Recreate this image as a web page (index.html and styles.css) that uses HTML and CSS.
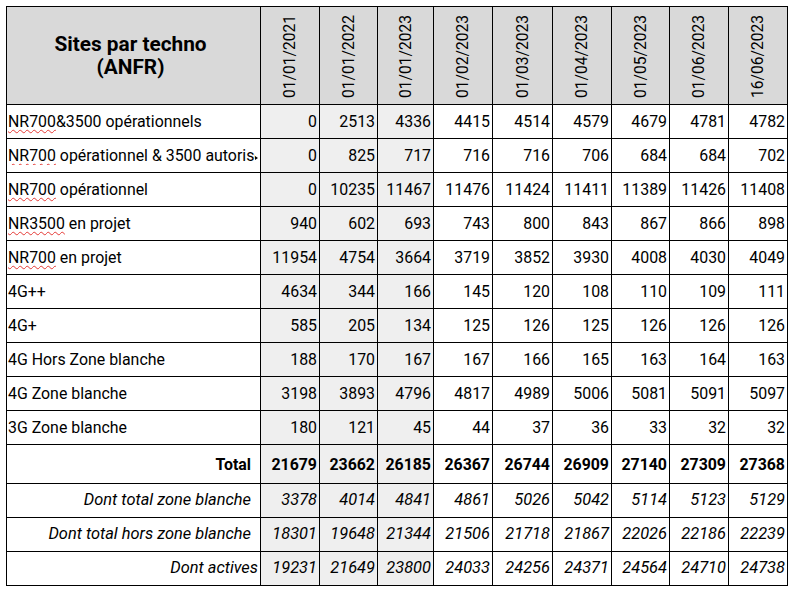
FILE: index.html
```html
<!DOCTYPE html>
<html lang="fr">
<head>
<meta charset="utf-8">
<title>Sites par techno (ANFR)</title>
<link rel="stylesheet" href="styles.css">
</head>
<body>
<div class="sheet">
  <div class="c hd title">Sites par techno<br>(ANFR)</div>
  <div class="c hd date"><span>01/01/2021</span></div>
  <div class="c hd date"><span>01/01/2022</span></div>
  <div class="c hd date"><span>01/01/2023</span></div>
  <div class="c hd date"><span>01/02/2023</span></div>
  <div class="c hd date"><span>01/03/2023</span></div>
  <div class="c hd date"><span>01/04/2023</span></div>
  <div class="c hd date"><span>01/05/2023</span></div>
  <div class="c hd date"><span>01/06/2023</span></div>
  <div class="c hd date"><span>16/06/2023</span></div>

  <div class="c lbl"><span class="t"><span class="sp">NR700</span>&amp;3500 opérationnels</span></div>
  <div class="c num g">0</div><div class="c num g">2513</div><div class="c num g">4336</div><div class="c num">4415</div><div class="c num">4514</div><div class="c num">4579</div><div class="c num">4679</div><div class="c num">4781</div><div class="c num">4782</div>

  <div class="c lbl trunc"><span class="t clip"><span class="sp">NR700</span> opérationnel &amp; 3500 autorisés</span><span class="tri"></span></div>
  <div class="c num g">0</div><div class="c num g">825</div><div class="c num g">717</div><div class="c num">716</div><div class="c num">716</div><div class="c num">706</div><div class="c num">684</div><div class="c num">684</div><div class="c num">702</div>

  <div class="c lbl"><span class="t"><span class="sp">NR700</span> opérationnel</span></div>
  <div class="c num g">0</div><div class="c num g">10235</div><div class="c num g">11467</div><div class="c num">11476</div><div class="c num">11424</div><div class="c num">11411</div><div class="c num">11389</div><div class="c num">11426</div><div class="c num">11408</div>

  <div class="c lbl"><span class="t"><span class="sp">NR3500</span> en projet</span></div>
  <div class="c num g">940</div><div class="c num g">602</div><div class="c num g">693</div><div class="c num">743</div><div class="c num">800</div><div class="c num">843</div><div class="c num">867</div><div class="c num">866</div><div class="c num">898</div>

  <div class="c lbl"><span class="t"><span class="sp">NR700</span> en projet</span></div>
  <div class="c num g">11954</div><div class="c num g">4754</div><div class="c num g">3664</div><div class="c num">3719</div><div class="c num">3852</div><div class="c num">3930</div><div class="c num">4008</div><div class="c num">4030</div><div class="c num">4049</div>

  <div class="c lbl">4G++</div>
  <div class="c num g">4634</div><div class="c num g">344</div><div class="c num g">166</div><div class="c num">145</div><div class="c num">120</div><div class="c num">108</div><div class="c num">110</div><div class="c num">109</div><div class="c num">111</div>

  <div class="c lbl">4G+</div>
  <div class="c num g">585</div><div class="c num g">205</div><div class="c num g">134</div><div class="c num">125</div><div class="c num">126</div><div class="c num">125</div><div class="c num">126</div><div class="c num">126</div><div class="c num">126</div>

  <div class="c lbl">4G Hors Zone blanche</div>
  <div class="c num g">188</div><div class="c num g">170</div><div class="c num g">167</div><div class="c num">167</div><div class="c num">166</div><div class="c num">165</div><div class="c num">163</div><div class="c num">164</div><div class="c num">163</div>

  <div class="c lbl">4G Zone blanche</div>
  <div class="c num g">3198</div><div class="c num g">3893</div><div class="c num g">4796</div><div class="c num">4817</div><div class="c num">4989</div><div class="c num">5006</div><div class="c num">5081</div><div class="c num">5091</div><div class="c num">5097</div>

  <div class="c lbl">3G Zone blanche</div>
  <div class="c num g">180</div><div class="c num g">121</div><div class="c num g">45</div><div class="c num">44</div><div class="c num">37</div><div class="c num">36</div><div class="c num">33</div><div class="c num">32</div><div class="c num">32</div>

  <div class="c lbl right pad tot">Total</div>
  <div class="c num g tot">21679</div><div class="c num g tot">23662</div><div class="c num g tot">26185</div><div class="c num tot">26367</div><div class="c num tot">26744</div><div class="c num tot">26909</div><div class="c num tot">27140</div><div class="c num tot">27309</div><div class="c num tot">27368</div>

  <div class="c lbl right pad it">Dont total zone blanche</div>
  <div class="c num g it">3378</div><div class="c num g it">4014</div><div class="c num g it">4841</div><div class="c num it">4861</div><div class="c num it">5026</div><div class="c num it">5042</div><div class="c num it">5114</div><div class="c num it">5123</div><div class="c num it">5129</div>

  <div class="c lbl right pad it">Dont total hors zone blanche</div>
  <div class="c num g it">18301</div><div class="c num g it">19648</div><div class="c num g it">21344</div><div class="c num it">21506</div><div class="c num it">21718</div><div class="c num it">21867</div><div class="c num it">22026</div><div class="c num it">22186</div><div class="c num it">22239</div>

  <div class="c lbl right it">Dont actives</div>
  <div class="c num g it">19231</div><div class="c num g it">21649</div><div class="c num g it">23800</div><div class="c num it">24033</div><div class="c num it">24256</div><div class="c num it">24371</div><div class="c num it">24564</div><div class="c num it">24710</div><div class="c num it">24738</div>
</div>
</body>
</html>
```
FILE: styles.css
```css
html, body {
  margin: 0;
  padding: 0;
  background: #ffffff;
}
body {
  padding: 6px;
  font-family: Roboto, "Liberation Sans", Arial, sans-serif;
  color: #000000;
}
.sheet {
  display: grid;
  grid-template-columns: 253px 58px 57px 55px 58px 59px 58px 57px 58px 58px;
  grid-template-rows: 97px repeat(10, 33px) 38px repeat(3, 33px);
  gap: 1px;
  padding: 1px;
  background: #000000;
  width: max-content;
}
.c {
  background: #ffffff;
  display: flex;
  align-items: flex-end;
  font-size: 15.9px;
  line-height: 18px;
  padding: 0 2px 7px 2px;
  white-space: nowrap;
  overflow: hidden;
  box-sizing: border-box;
  min-width: 0;
}
.hd {
  background: #d9d9d9;
}
.title {
  align-items: center;
  justify-content: center;
  text-align: center;
  font-weight: 700;
  font-size: 20.8px;
  line-height: 23.5px;
  padding: 1px 6px 0 0;
  white-space: normal;
}
.date {
  justify-content: center;
  padding: 0 0 6px 0;
  font-size: 15.6px;
}
.date span {
  writing-mode: vertical-rl;
  transform: rotate(180deg);
  line-height: 18px;
}
.lbl {
  padding-left: 1px;
}
.t {
  white-space: nowrap;
}
.num {
  justify-content: flex-end;
  padding-right: 2px;
}
.g {
  background: #efefef;
}
.right {
  justify-content: flex-end;
}
.pad {
  padding-right: 9px;
}
.tot {
  font-weight: 700;
  padding-bottom: 9px;
}
.it {
  font-style: italic;
  font-size: 16.4px;
  padding-bottom: 8px;
}
.sp {
  text-decoration: underline wavy #e53935;
  text-decoration-thickness: 1px;
  text-underline-offset: 2px;
  text-decoration-skip-ink: none;
}
.trunc {
  padding-right: 2px;
}
.clip {
  flex: 1 1 auto;
  min-width: 0;
  overflow: hidden;
}
.tri {
  flex: none;
  width: 0;
  height: 0;
  border-top: 2.5px solid transparent;
  border-bottom: 2.5px solid transparent;
  border-left: 3px solid #000000;
  margin-bottom: 5px;
}
```
